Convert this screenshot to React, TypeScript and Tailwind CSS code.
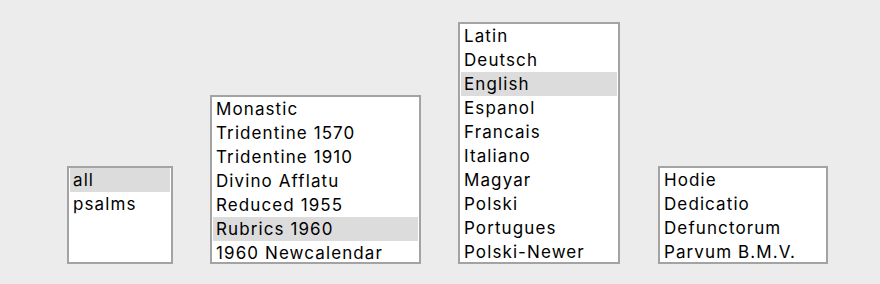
import React from "react";

type ListProps = {
  items: string[];
  selected?: number;
  widthClass: string;
  heightClass: string;
};

function ListBox({ items, selected, widthClass, heightClass }: ListProps) {
  return (
    <div
      className={`${widthClass} ${heightClass} shrink-0 overflow-hidden border-2 border-[#a3a3a3] bg-white px-px`}
    >
      {items.map((it, i) => (
        <div
          key={it}
          className={`h-[24px] whitespace-nowrap pl-[3px] leading-[24px] text-black ${
            i === selected ? "bg-[#dcdcdc]" : ""
          }`}
        >
          {it}
        </div>
      ))}
    </div>
  );
}

export default function App() {
  return (
    <div
      className="flex h-[284px] w-[880px] items-end gap-[37px] bg-[#ececec] pb-[20px] pl-[67px] text-[17px] tracking-[1.1px]"
      style={{ fontFamily: "Inter, 'Liberation Sans', sans-serif" }}
    >
      <ListBox items={["all", "psalms"]} selected={0} widthClass="w-[106px]" heightClass="h-[98px]" />
      <ListBox
        items={[
          "Monastic",
          "Tridentine 1570",
          "Tridentine 1910",
          "Divino Afflatu",
          "Reduced 1955",
          "Rubrics 1960",
          "1960 Newcalendar",
        ]}
        selected={5}
        widthClass="w-[211px]"
        heightClass="h-[169px]"
      />
      <ListBox
        items={[
          "Latin",
          "Deutsch",
          "English",
          "Espanol",
          "Francais",
          "Italiano",
          "Magyar",
          "Polski",
          "Portugues",
          "Polski-Newer",
        ]}
        selected={2}
        widthClass="w-[162px]"
        heightClass="h-[242px]"
      />
      <div className="ml-px">
        <ListBox
          items={["Hodie", "Dedicatio", "Defunctorum", "Parvum B.M.V."]}
          widthClass="w-[170px]"
          heightClass="h-[98px]"
        />
      </div>
    </div>
  );
}
